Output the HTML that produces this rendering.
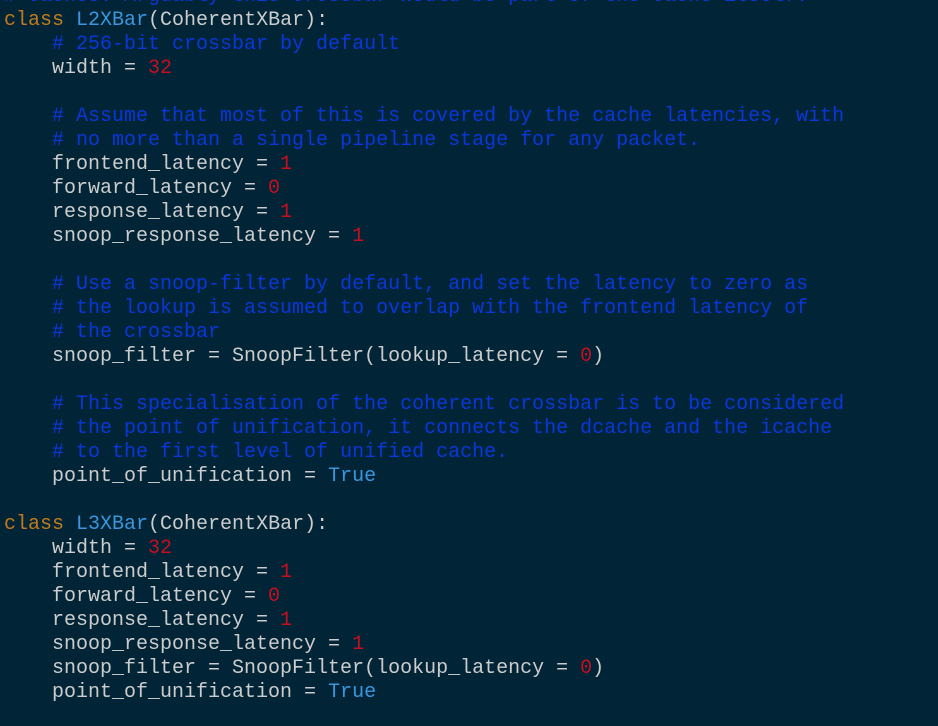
<!DOCTYPE html>
<html><head><style>
html,body{margin:0;padding:0;background:#012537;width:938px;height:726px;overflow:hidden}
pre{position:absolute;left:4px;top:-15px;margin:0;font-family:"Liberation Mono",monospace;font-size:20px;line-height:24px;color:#cccccc;letter-spacing:0}
.c{color:#0a37da}.k{color:#c17a1c}.n{color:#3a96dd}.d{color:#c50f1f}
</style></head><body><pre><span class="c"># caches. Arguably this crossbar would be part of the cache itself.</span>
<span class="k">class</span> <span class="n">L2XBar</span>(CoherentXBar):
    <span class="c"># 256-bit crossbar by default</span>
    width = <span class="d">32</span>

    <span class="c"># Assume that most of this is covered by the cache latencies, with</span>
    <span class="c"># no more than a single pipeline stage for any packet.</span>
    frontend_latency = <span class="d">1</span>
    forward_latency = <span class="d">0</span>
    response_latency = <span class="d">1</span>
    snoop_response_latency = <span class="d">1</span>

    <span class="c"># Use a snoop-filter by default, and set the latency to zero as</span>
    <span class="c"># the lookup is assumed to overlap with the frontend latency of</span>
    <span class="c"># the crossbar</span>
    snoop_filter = SnoopFilter(lookup_latency = <span class="d">0</span>)

    <span class="c"># This specialisation of the coherent crossbar is to be considered</span>
    <span class="c"># the point of unification, it connects the dcache and the icache</span>
    <span class="c"># to the first level of unified cache.</span>
    point_of_unification = <span class="n">True</span>

<span class="k">class</span> <span class="n">L3XBar</span>(CoherentXBar):
    width = <span class="d">32</span>
    frontend_latency = <span class="d">1</span>
    forward_latency = <span class="d">0</span>
    response_latency = <span class="d">1</span>
    snoop_response_latency = <span class="d">1</span>
    snoop_filter = SnoopFilter(lookup_latency = <span class="d">0</span>)
    point_of_unification = <span class="n">True</span>
</pre></body></html>
